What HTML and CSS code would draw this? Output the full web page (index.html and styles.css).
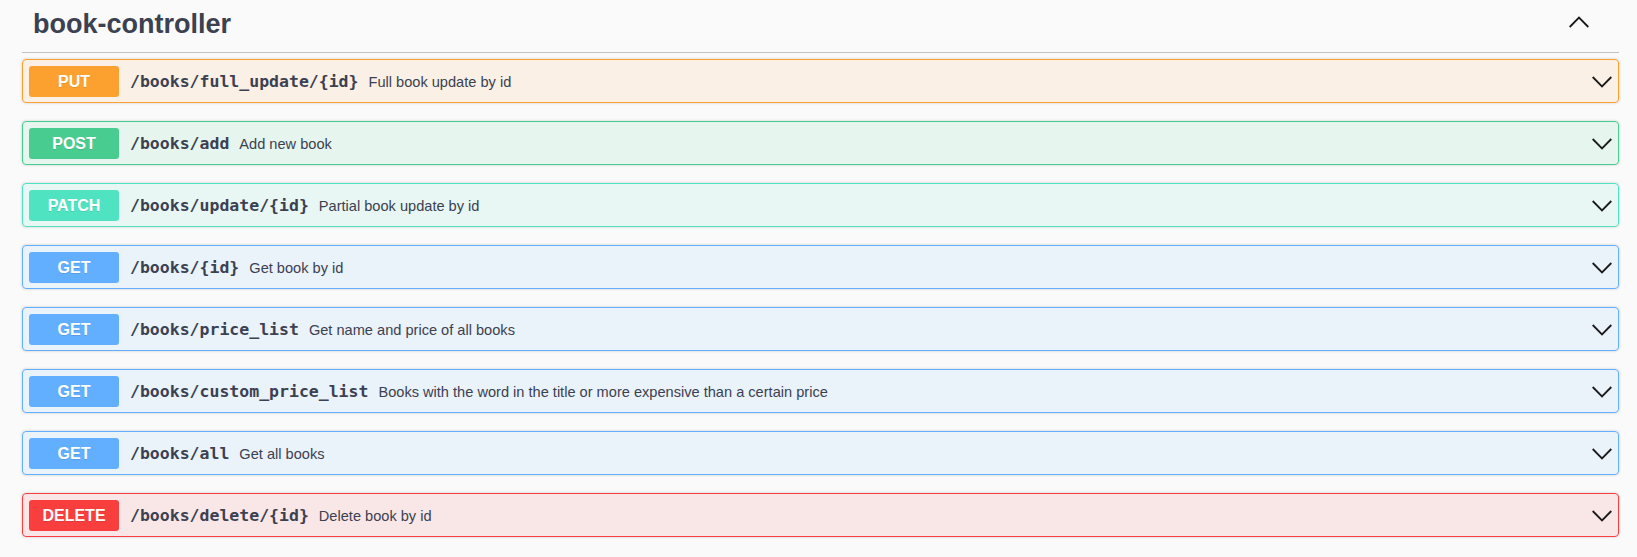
FILE: index.html
```html
<!DOCTYPE html>
<html>
<head>
<meta charset="utf-8">
<link rel="stylesheet" href="styles.css">
</head>
<body>
<div class="section">
  <div class="tag-header">
    <h3 class="tag-title">book-controller</h3>
    <svg class="tag-arrow" width="20" height="20" viewBox="0 0 20 20"><polyline points="0.7,15 10,5.6 19.3,15" fill="none" stroke="#1a1a1a" stroke-width="1.8"/></svg>
  </div>
  <div class="ops">
    <div class="op op-put"><span class="method">PUT</span><span class="path">/books/full_update/{id}</span><span class="desc">Full book update by id</span><svg class="arrow" width="20" height="20" viewBox="0 0 20 20"><polyline points="0.7,5 10,14.4 19.3,5" fill="none" stroke="#1a1a1a" stroke-width="1.8"/></svg></div>
    <div class="op op-post"><span class="method">POST</span><span class="path">/books/add</span><span class="desc">Add new book</span><svg class="arrow" width="20" height="20" viewBox="0 0 20 20"><polyline points="0.7,5 10,14.4 19.3,5" fill="none" stroke="#1a1a1a" stroke-width="1.8"/></svg></div>
    <div class="op op-patch"><span class="method">PATCH</span><span class="path">/books/update/{id}</span><span class="desc">Partial book update by id</span><svg class="arrow" width="20" height="20" viewBox="0 0 20 20"><polyline points="0.7,5 10,14.4 19.3,5" fill="none" stroke="#1a1a1a" stroke-width="1.8"/></svg></div>
    <div class="op op-get"><span class="method">GET</span><span class="path">/books/{id}</span><span class="desc">Get book by id</span><svg class="arrow" width="20" height="20" viewBox="0 0 20 20"><polyline points="0.7,5 10,14.4 19.3,5" fill="none" stroke="#1a1a1a" stroke-width="1.8"/></svg></div>
    <div class="op op-get"><span class="method">GET</span><span class="path">/books/price_list</span><span class="desc">Get name and price of all books</span><svg class="arrow" width="20" height="20" viewBox="0 0 20 20"><polyline points="0.7,5 10,14.4 19.3,5" fill="none" stroke="#1a1a1a" stroke-width="1.8"/></svg></div>
    <div class="op op-get"><span class="method">GET</span><span class="path">/books/custom_price_list</span><span class="desc">Books with the word in the title or more expensive than a certain price</span><svg class="arrow" width="20" height="20" viewBox="0 0 20 20"><polyline points="0.7,5 10,14.4 19.3,5" fill="none" stroke="#1a1a1a" stroke-width="1.8"/></svg></div>
    <div class="op op-get"><span class="method">GET</span><span class="path">/books/all</span><span class="desc">Get all books</span><svg class="arrow" width="20" height="20" viewBox="0 0 20 20"><polyline points="0.7,5 10,14.4 19.3,5" fill="none" stroke="#1a1a1a" stroke-width="1.8"/></svg></div>
    <div class="op op-delete"><span class="method">DELETE</span><span class="path">/books/delete/{id}</span><span class="desc">Delete book by id</span><svg class="arrow" width="20" height="20" viewBox="0 0 20 20"><polyline points="0.7,5 10,14.4 19.3,5" fill="none" stroke="#1a1a1a" stroke-width="1.8"/></svg></div>
  </div>
</div>
</body>
</html>
```
FILE: styles.css
```css
html, body {
  margin: 0;
  padding: 0;
  background: #fafafa;
  font-family: "Liberation Sans", Arial, sans-serif;
  color: #3b4151;
}
.section {
  padding: 0 18px 0 22px;
}
.tag-header {
  display: flex;
  justify-content: space-between;
  align-items: flex-start;
  height: 52px;
  border-bottom: 1px solid rgba(59, 65, 81, 0.3);
}
.tag-title {
  margin: 0;
  padding: 9px 0 0 11px;
  font-size: 27px;
  line-height: 30px;
  font-weight: 700;
  color: #3b4151;
}
.tag-arrow {
  margin-top: 12px;
  margin-right: 30px;
  display: block;
}
.ops {
  padding-top: 6px;
}
.op {
  display: flex;
  align-items: center;
  height: 44px;
  box-sizing: border-box;
  padding: 6px 6px 5px 6px;
  margin-bottom: 18px;
  border: 1px solid;
  border-radius: 4px;
  box-shadow: 0 0 3px rgba(0, 0, 0, 0.19);
}
.method {
  flex: none;
  width: 90px;
  height: 31px;
  line-height: 31px;
  border-radius: 3px;
  text-align: center;
  color: #fff;
  font-size: 16px;
  font-weight: 700;
  text-shadow: 0 1px 0 rgba(0, 0, 0, 0.1);
}
.path {
  margin-left: 11px;
  font-family: "DejaVu Sans Mono", "Liberation Mono", monospace;
  font-weight: 700;
  font-size: 16.5px;
  color: #3b4151;
}
.desc {
  margin-left: 10px;
  font-size: 14.6px;
  color: #3b4151;
}
.arrow {
  margin-left: auto;
  display: block;
  flex: none;
}
.op-put { background: rgba(252, 161, 48, 0.1); border-color: #fca130; }
.op-put .method { background: #fca130; }
.op-post { background: rgba(73, 204, 144, 0.1); border-color: #49cc90; }
.op-post .method { background: #49cc90; }
.op-patch { background: rgba(80, 227, 194, 0.1); border-color: #50e3c2; }
.op-patch .method { background: #50e3c2; }
.op-get { background: rgba(97, 175, 254, 0.1); border-color: #61affe; }
.op-get .method { background: #61affe; }
.op-delete { background: rgba(249, 62, 62, 0.1); border-color: #f93e3e; }
.op-delete .method { background: #f93e3e; }
```
